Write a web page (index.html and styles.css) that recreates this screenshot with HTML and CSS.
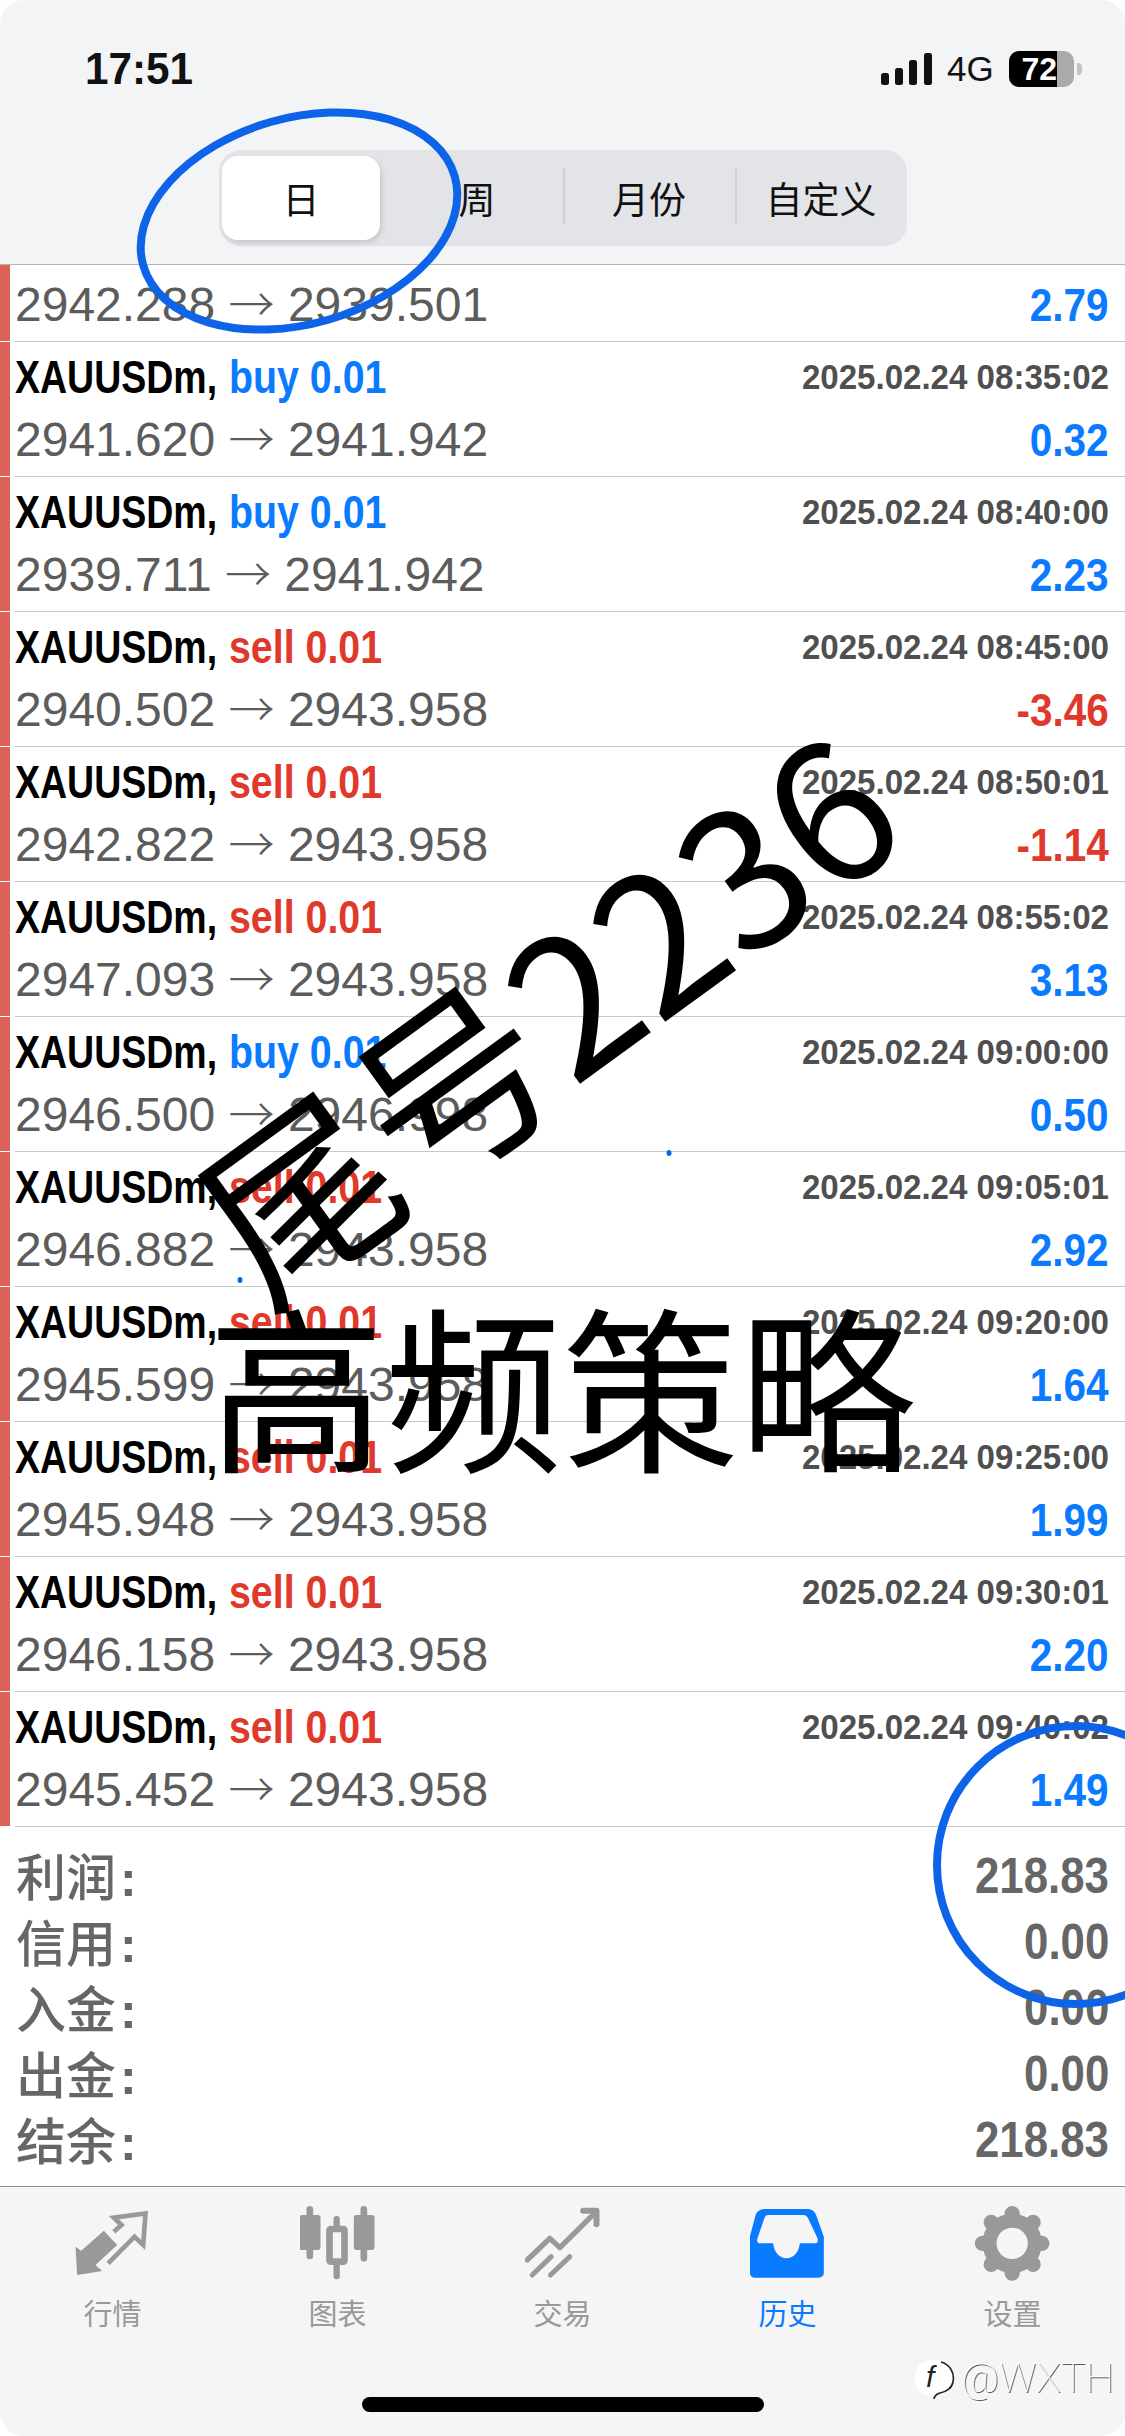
FILE: index.html
```html
<!DOCTYPE html>
<html lang="en">
<head>
    <meta charset="UTF-8">
    <meta name="viewport" content="width=device-width, initial-scale=1.0">
    <title>History</title>
    <link rel="stylesheet" href="styles.css">
</head>
<body>
<div class="phone">
    <!-- Status bar and period switch -->
    <header class="top">
        <div class="status">
            <span class="time">17:51</span>
            <div class="status-right">
                <svg class="signal" width="52" height="32" viewBox="0 0 52 32">
                    <rect x="0" y="20" width="8" height="12" rx="2.5"/>
                    <rect x="14" y="15" width="8" height="17" rx="2.5"/>
                    <rect x="28" y="7" width="8" height="25" rx="2.5"/>
                    <rect x="43" y="0" width="8" height="32" rx="2.5"/>
                </svg>
                <span class="net">4G</span>
                <div class="battery">
                    <div class="battery-fill">72</div>
                </div>
                <div class="battery-nub"></div>
            </div>
        </div>
        <div class="segments">
            <div class="seg seg-on">日</div>
            <div class="seg">周</div>
            <div class="seg seg-line">月份</div>
            <div class="seg seg-line">自定义</div>
        </div>
    </header>

    <!-- Deals -->
    <div class="deals">
        <div class="deal deal-cut">
            <div class="deal-body">
                <div class="deal-line"><span class="price">2942.288 <span class="arrow">→</span> 2939.501</span><span class="profit"><b class="up">2.79</b></span></div>
            </div>
        </div>
        <div class="deal"><div class="deal-body">
            <div class="deal-line"><span class="sym"><span class="sym-name">XAUUSDm,</span><i class="up">buy 0.01</i></span><span class="date">2025.02.24 08:35:02</span></div>
            <div class="deal-line"><span class="price">2941.620 <span class="arrow">→</span> 2941.942</span><span class="profit"><b class="up">0.32</b></span></div>
        </div></div>
        <div class="deal"><div class="deal-body">
            <div class="deal-line"><span class="sym"><span class="sym-name">XAUUSDm,</span><i class="up">buy 0.01</i></span><span class="date">2025.02.24 08:40:00</span></div>
            <div class="deal-line"><span class="price">2939.711 <span class="arrow">→</span> 2941.942</span><span class="profit"><b class="up">2.23</b></span></div>
        </div></div>
        <div class="deal"><div class="deal-body">
            <div class="deal-line"><span class="sym"><span class="sym-name">XAUUSDm,</span><i class="down">sell 0.01</i></span><span class="date">2025.02.24 08:45:00</span></div>
            <div class="deal-line"><span class="price">2940.502 <span class="arrow">→</span> 2943.958</span><span class="profit"><b class="down">-3.46</b></span></div>
        </div></div>
        <div class="deal"><div class="deal-body">
            <div class="deal-line"><span class="sym"><span class="sym-name">XAUUSDm,</span><i class="down">sell 0.01</i></span><span class="date">2025.02.24 08:50:01</span></div>
            <div class="deal-line"><span class="price">2942.822 <span class="arrow">→</span> 2943.958</span><span class="profit"><b class="down">-1.14</b></span></div>
        </div></div>
        <div class="deal"><div class="deal-body">
            <div class="deal-line"><span class="sym"><span class="sym-name">XAUUSDm,</span><i class="down">sell 0.01</i></span><span class="date">2025.02.24 08:55:02</span></div>
            <div class="deal-line"><span class="price">2947.093 <span class="arrow">→</span> 2943.958</span><span class="profit"><b class="up">3.13</b></span></div>
        </div></div>
        <div class="deal"><div class="deal-body">
            <div class="deal-line"><span class="sym"><span class="sym-name">XAUUSDm,</span><i class="up">buy 0.01</i></span><span class="date">2025.02.24 09:00:00</span></div>
            <div class="deal-line"><span class="price">2946.500 <span class="arrow">→</span> 2946.998</span><span class="profit"><b class="up">0.50</b></span></div>
        </div></div>
        <div class="deal"><div class="deal-body">
            <div class="deal-line"><span class="sym"><span class="sym-name">XAUUSDm,</span><i class="down">sell 0.01</i></span><span class="date">2025.02.24 09:05:01</span></div>
            <div class="deal-line"><span class="price">2946.882 <span class="arrow">→</span> 2943.958</span><span class="profit"><b class="up">2.92</b></span></div>
        </div></div>
        <div class="deal"><div class="deal-body">
            <div class="deal-line"><span class="sym"><span class="sym-name">XAUUSDm,</span><i class="down">sell 0.01</i></span><span class="date">2025.02.24 09:20:00</span></div>
            <div class="deal-line"><span class="price">2945.599 <span class="arrow">→</span> 2943.958</span><span class="profit"><b class="up">1.64</b></span></div>
        </div></div>
        <div class="deal"><div class="deal-body">
            <div class="deal-line"><span class="sym"><span class="sym-name">XAUUSDm,</span><i class="down">sell 0.01</i></span><span class="date">2025.02.24 09:25:00</span></div>
            <div class="deal-line"><span class="price">2945.948 <span class="arrow">→</span> 2943.958</span><span class="profit"><b class="up">1.99</b></span></div>
        </div></div>
        <div class="deal"><div class="deal-body">
            <div class="deal-line"><span class="sym"><span class="sym-name">XAUUSDm,</span><i class="down">sell 0.01</i></span><span class="date">2025.02.24 09:30:01</span></div>
            <div class="deal-line"><span class="price">2946.158 <span class="arrow">→</span> 2943.958</span><span class="profit"><b class="up">2.20</b></span></div>
        </div></div>
        <div class="deal"><div class="deal-body">
            <div class="deal-line"><span class="sym"><span class="sym-name">XAUUSDm,</span><i class="down">sell 0.01</i></span><span class="date">2025.02.24 09:40:02</span></div>
            <div class="deal-line"><span class="price">2945.452 <span class="arrow">→</span> 2943.958</span><span class="profit"><b class="up">1.49</b></span></div>
        </div></div>
    </div>

    <!-- Totals -->
    <div class="totals">
        <div class="total"><span class="total-name">利润<b>:</b></span><span class="total-num"><b>218.83</b></span></div>
        <div class="total"><span class="total-name">信用<b>:</b></span><span class="total-num"><b>0.00</b></span></div>
        <div class="total"><span class="total-name">入金<b>:</b></span><span class="total-num"><b>0.00</b></span></div>
        <div class="total"><span class="total-name">出金<b>:</b></span><span class="total-num"><b>0.00</b></span></div>
        <div class="total"><span class="total-name">结余<b>:</b></span><span class="total-num"><b>218.83</b></span></div>
    </div>

    <!-- Tab bar -->
    <nav class="tabs">
        <div class="tab">
            <svg class="tab-icon" width="76" height="76" viewBox="43.5 33 228 228">
                <path d="M45 155 62 167 130 107 170 150 105 210 125 228 50 240Z" fill="#999"/>
                <path d="M160 110 183 90 160 68 255 55 248 150 222 125 143 205" fill="none" stroke="#999" stroke-width="14"/>
            </svg>
            <span>行情</span>
        </div>
        <div class="tab">
            <svg class="tab-icon" width="76" height="76" viewBox="718.5 33 228 228">
                <g fill="#999">
                    <rect x="717" y="60" width="63" height="105" rx="8"/>
                    <rect x="738" y="33" width="20" height="160" rx="10"/>
                    <rect x="880" y="60" width="62" height="105" rx="8"/>
                    <rect x="900" y="33" width="20" height="167" rx="10"/>
                    <rect x="819" y="63" width="19" height="190" rx="9"/>
                </g>
                <rect x="807" y="102" width="45" height="98" rx="4" fill="#f5f5f5" stroke="#999" stroke-width="20"/>
            </svg>
            <span>图表</span>
        </div>
        <div class="tab">
            <svg class="tab-icon" width="76" height="76" viewBox="43.5 33 228 228">
                <g fill="none" stroke="#999" stroke-linecap="round" stroke-linejoin="round">
                    <path d="M50 195 118 130 148 158 245 62" stroke-width="16"/>
                    <path d="M218 47H258V88" stroke-width="18"/>
                    <path d="M65 240 122 185" stroke-width="15"/>
                    <path d="M120 240 178 185" stroke-width="15"/>
                </g>
            </svg>
            <span>交易</span>
        </div>
        <div class="tab tab-on">
            <svg class="tab-icon" width="76" height="76" viewBox="718.5 33 228 228">
                <path fill-rule="evenodd" fill="#0a7aff" d="M762 42H890Q908 42 916 58L940 125V232Q940 248 924 248H734Q718 248 718 232V125L736 58Q744 42 762 42ZM772 60H880Q888 60 892 68L921 130Q925 145 912 145H868C866 170 850 190 828 190S790 170 788 145H750Q737 145 741 130L762 68Q765 60 772 60Z"/>
            </svg>
            <span>历史</span>
        </div>
        <div class="tab">
            <svg class="tab-icon" width="76" height="76" viewBox="43.5 33 228 228">
                <g stroke="#999" stroke-width="46" stroke-linecap="round">
                    <path d="M155 56V234"/>
                    <path d="M155 56V234" transform="rotate(45 155 145)"/>
                    <path d="M155 56V234" transform="rotate(90 155 145)"/>
                    <path d="M155 56V234" transform="rotate(135 155 145)"/>
                </g>
                <circle cx="155" cy="145" r="68" fill="#999" stroke="#999" stroke-width="42"/>
                <circle cx="155" cy="145" r="47" fill="#f5f5f5"/>
            </svg>
            <span>设置</span>
        </div>
    </nav>

    <div class="home-bar"></div>
    <div class="mark">
        <svg width="40" height="44" viewBox="0 0 40 44">
            <rect x="0" y="4" width="38" height="36" rx="16" fill="#fff"/>
            <path d="M26 6C34 8 40 16 38 26 37 32 31 36 25 37 21 38 19 41 19 43" fill="none" stroke="#222" stroke-width="1.6"/>
            <text class="mark-f" x="11" y="31">f</text>
        </svg>
        <span class="mark-name">@WXTH</span>
    </div>

    <!-- Hand drawn notes on top of the screenshot -->
    <svg class="notes" width="1125" height="2436" viewBox="0 0 1125 2436">
        <ellipse cx="299" cy="221" rx="162" ry="103" transform="rotate(-16 299 221)" fill="none" stroke="#0d64e8" stroke-width="8"/>
        <circle cx="1076" cy="1865" r="139" fill="none" stroke="#0d64e8" stroke-width="8"/>
        <ellipse cx="669" cy="1153" rx="2.5" ry="3" fill="#0d64e8"/>
        <ellipse cx="240" cy="1280" rx="2.5" ry="3" fill="#0d64e8"/>
    </svg>
    <div class="note note-tail">尾号2236</div>
    <div class="note note-title">高频策略</div>
</div>
</body>
</html>
```

FILE: styles.css
```css
/* General Styles */
body {
    margin: 0;
    padding: 0;
    background: #fff;
    font-family: "Liberation Sans", "Noto Sans CJK SC", sans-serif;
}

.phone {
    position: relative;
    width: 1125px;
    height: 2436px;
    overflow: hidden;
    display: flex;
    flex-direction: column;
}

/* Status bar and period switch */
.top {
    height: 264px;
    background: #f3f4f6;
    border-bottom: 1px solid #b4b4b4;
    border-radius: 24px 24px 0 0;
}

.status {
    display: flex;
    justify-content: space-between;
    align-items: center;
    height: 36px;
    padding: 51px 43px 0 85px;
}

.time {
    font-size: 44px;
    font-weight: bold;
    color: #111;
    display: inline-block;
    transform: scaleX(.96);
    transform-origin: left;
}

.status-right {
    display: flex;
    align-items: center;
}

.signal {
    fill: #111;
}

.net {
    font-size: 35px;
    color: #111;
    margin-left: 14px;
    width: 62px;
}

.battery {
    width: 65px;
    height: 36px;
    border-radius: 10px;
    background: #aaa;
    overflow: hidden;
}

.battery-fill {
    width: 48px;
    height: 36px;
    background: #000;
    color: #fff;
    font-size: 32px;
    font-weight: bold;
    line-height: 36px;
    text-align: right;
    white-space: nowrap;
}

.battery-nub {
    width: 5px;
    height: 12px;
    margin-left: 3px;
    background: #c4c4c4;
    border-radius: 0 4px 4px 0;
}

.segments {
    display: grid;
    grid-template-columns: repeat(4, 1fr);
    width: 688px;
    height: 96px;
    margin: 63px 0 0 219px;
    background: #e3e4e7;
    border-radius: 22px;
}

.seg {
    position: relative;
    display: flex;
    align-items: center;
    justify-content: center;
    font-size: 37px;
    color: #111;
}

.seg-line::before {
    content: "";
    position: absolute;
    left: 0;
    top: 18px;
    height: 56px;
    width: 2px;
    background: #cfd0d3;
}

.seg-on {
    margin: 6px 11px 6px 3px;
    background: #fff;
    border-radius: 16px;
    box-shadow: 2px 3px 5px rgba(0, 0, 0, 0.12);
}

/* Deals */
.deal {
    height: 135px;
    box-sizing: border-box;
    padding-left: 15px;
    background: linear-gradient(#dc6156, #dc6156) no-repeat 0 0 / 10px 134px;
}

.deal-cut {
    height: 77px;
    background-size: 10px 76px;
}

.deal-body {
    height: 100%;
    box-sizing: border-box;
    padding: 3px 16px 0 0;
    border-bottom: 1px solid #c8c8c8;
}

.deal-cut .deal-body {
    padding-top: 8px;
}

.deal-line {
    display: flex;
    justify-content: space-between;
    align-items: center;
    height: 63px;
    white-space: nowrap;
}

.sym {
    display: flex;
    font-size: 46px;
    font-weight: bold;
    color: #000;
}

.sym-name {
    display: inline-block;
    width: 214px;
    transform: scaleX(.815);
    transform-origin: left;
}

.sym i {
    display: inline-block;
    font-style: normal;
    transform: scaleX(.855);
    transform-origin: left;
}

.up {
    color: #0a7aff;
}

.down {
    color: #e0392b;
}

.date {
    display: inline-block;
    font-size: 35px;
    font-weight: bold;
    color: #4f4f4f;
    transform: scaleX(.945);
    transform-origin: right;
}

.price {
    font-size: 48px;
    line-height: 63px;
    color: #5c5c5c;
}

.arrow {
    font-family: "Noto Sans CJK SC", sans-serif;
    font-size: 46px;
    font-weight: 300;
    line-height: 0;
}

.profit b {
    display: inline-block;
    font-size: 46px;
    transform: scaleX(.88);
    transform-origin: right;
}

/* Totals */
.totals {
    padding: 16px 16px 0 16px;
}

.total {
    display: flex;
    justify-content: space-between;
    align-items: center;
    height: 66px;
    font-size: 50px;
    color: #666;
}

.total-name {
    font-weight: 500;
    padding-bottom: 5px;
}

.total-name b {
    margin-left: 4px;
}

.total-num b {
    display: inline-block;
    font-size: 50px;
    transform: scaleX(.876);
    transform-origin: right;
}

/* Tab bar */
.tabs {
    position: absolute;
    left: 0;
    right: 0;
    bottom: 0;
    height: 249px;
    display: flex;
    background: #f5f5f5;
    border-top: 1px solid #8f8f8f;
    border-radius: 0 0 24px 24px;
}

.tab {
    flex: 1;
    display: flex;
    flex-direction: column;
    align-items: center;
    padding-top: 19px;
    font-size: 29px;
    color: #999;
}

.tab-icon {
    margin-bottom: 9px;
}

.tab-on {
    color: #0a7aff;
}

/* Things that lie over the page */
.home-bar {
    position: absolute;
    left: 362px;
    top: 2397px;
    width: 402px;
    height: 15px;
    background: #000;
    border-radius: 8px;
}

.mark {
    position: absolute;
    left: 915px;
    top: 2354px;
    display: flex;
    align-items: center;
    gap: 6px;
}

.mark-f {
    font-size: 30px;
    font-style: italic;
    fill: #222;
}

.mark-name {
    font-family: Roboto, "Liberation Sans", sans-serif;
    font-size: 41px;
    font-weight: 100;
    color: #fff;
    text-shadow: 1px 1px 0 #555;
    white-space: nowrap;
}

.notes {
    position: absolute;
    left: 0;
    top: 0;
}

.note {
    position: absolute;
    font-family: "Noto Sans CJK SC", sans-serif;
    color: #000;
    white-space: nowrap;
}

.note-tail {
    left: 141px;
    top: 915px;
    font-size: 190px;
    line-height: 1;
    transform: rotate(-36deg);
}

.note-title {
    left: 208px;
    top: 1294px;
    font-size: 177px;
    line-height: 1;
}
```
